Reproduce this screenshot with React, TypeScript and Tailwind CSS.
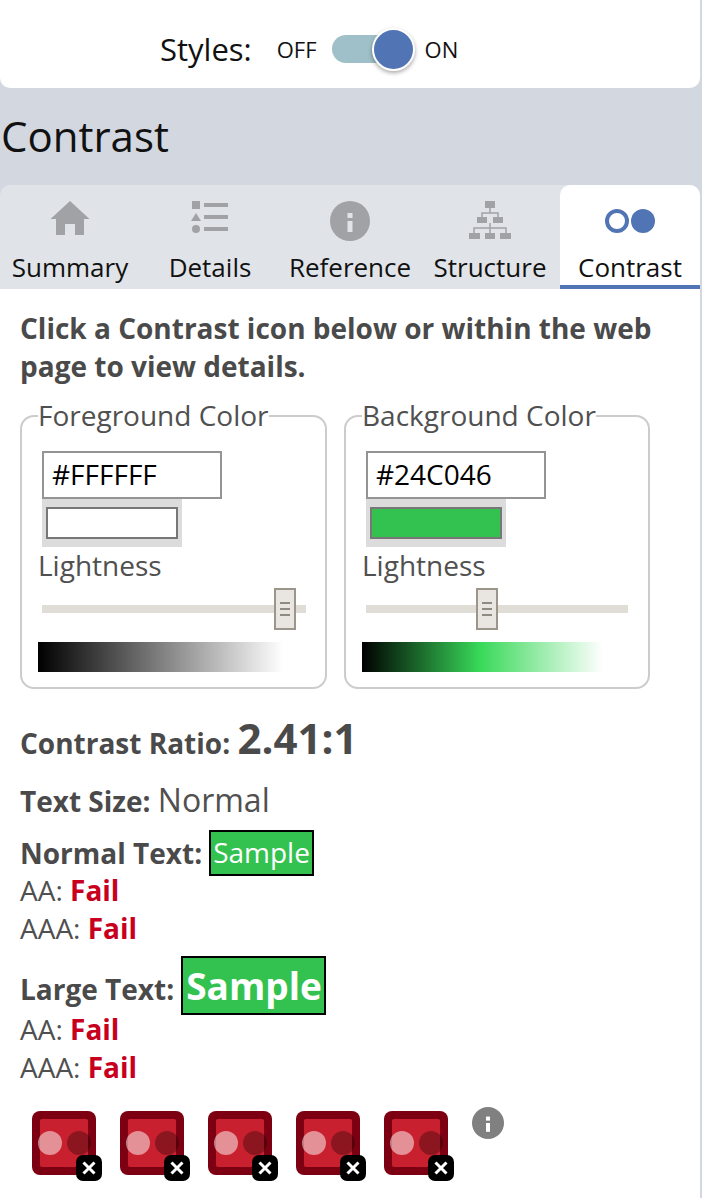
import React from "react";

const GRAY = "#a0a2a6";
const BLUE = "#5174b4";

function Tab({ label, active, icon }: { label: string; active?: boolean; icon: React.ReactNode }) {
  return (
    <div className={`w-[140px] h-[104px] flex flex-col items-center ${active ? "bg-white rounded-t-[10px] border-b-[4px] border-[#5174b4]" : ""}`}>
      <div className="h-[65px] w-full flex items-start justify-center">{icon}</div>
      <div className="text-[26px] leading-[34px] text-[#111] whitespace-nowrap">{label}</div>
    </div>
  );
}

function Home() {
  return (
    <svg width="40" height="34" viewBox="0 0 40 34" className="mt-[16px]">
      <path fill={GRAY} d="M20 0 L39.500 18 L34 18 L34 34 L25 34 L25 23 L15 23 L15 34 L6 34 L6 18 L0.500 18 Z" />
    </svg>
  );
}

function DetailsIcon() {
  return (
    <svg width="38" height="33" viewBox="0 0 38 33" className="mt-[16px]">
      <rect x="1" y="0" width="8" height="8" fill={GRAY} />
      <path d="M5 12 L10 20 L0 20 Z" fill={GRAY} />
      <circle cx="5" cy="28" r="4" fill={GRAY} />
      <rect x="13" y="2" width="24" height="4" fill={GRAY} />
      <rect x="13" y="14" width="24" height="4" fill={GRAY} />
      <rect x="13" y="26" width="24" height="4" fill={GRAY} />
    </svg>
  );
}

function InfoIcon({ size, color, inner, top }: { size: number; color: string; inner: string; top: number }) {
  return (
    <svg width={size} height={size} viewBox="0 0 40 40" style={{ marginTop: top }}>
      <circle cx="20" cy="20" r="20" fill={color} />
      <rect x="17.500" y="12" width="5" height="5" fill={inner} />
      <rect x="17.500" y="20" width="5" height="11" fill={inner} />
    </svg>
  );
}

function StructureIcon() {
  return (
    <svg width="42" height="38" viewBox="0 0 42 38" className="mt-[16px]" fill={GRAY}>
      <rect x="16" y="0" width="10" height="7" />
      <rect x="8" y="16" width="10" height="6" />
      <rect x="24" y="16" width="10" height="6" />
      <rect x="0" y="32" width="11" height="6" />
      <rect x="16" y="32" width="10" height="6" />
      <rect x="31" y="32" width="11" height="6" />
      <path fill="none" stroke={GRAY} strokeWidth="1.500" d="M21 7V12M13 16V12H29V16M21 22V27M5 32V27H37V32M21 27V32" />
    </svg>
  );
}

function ContrastIcon() {
  return (
    <svg width="50" height="24" viewBox="0 0 50 24" className="mt-[24px]">
      <circle cx="12" cy="12" r="10" fill="none" stroke={BLUE} strokeWidth="4" />
      <circle cx="38" cy="12" r="12" fill={BLUE} />
    </svg>
  );
}

function Slider({ pos, width }: { pos: number; width: number }) {
  return (
    <div className="relative h-[42px] flex items-center" style={{ width }}>
      <div className="w-full h-[8px] bg-[#e0dcd6]" />
      <div className="absolute top-0 w-[22px] h-[42px] bg-[#e9e5e1] border-[2px] border-[#9b958c] flex flex-col items-center justify-center gap-[4px]" style={{ left: pos }}>
        <div className="w-[10px] h-[2px] bg-[#8f8a82]" />
        <div className="w-[10px] h-[2px] bg-[#8f8a82]" />
        <div className="w-[10px] h-[2px] bg-[#8f8a82]" />
      </div>
    </div>
  );
}

function ColorBox({ title, hex, swatch, sliderPos, sliderWidth, gradient, gradientWidth, width }: {
  title: string; hex: string; swatch: string; sliderPos: number; sliderWidth: number; gradient: string; gradientWidth: number; width: number;
}) {
  return (
    <fieldset className="border-[2px] border-[#cccccc] rounded-[14px] h-[290px] pl-[16px] box-border" style={{ width }}>
      <legend className="text-[28px] leading-[34px] text-[#505050] -translate-y-px">{title}</legend>
      <div className="ml-[4px] mt-[18px] w-[180px] h-[48px] border-[2px] border-[#949494] bg-white pl-[8px] text-[28px] leading-[42px] text-black">{hex}</div>
      <div className="ml-[4px] w-[140px] h-[48px] bg-[#dcdcdc] px-[4px] py-[8px]">
        <div className="w-[132px] h-[32px] border-[2px] border-[#777]" style={{ background: swatch }} />
      </div>
      <div className="text-[28px] leading-[34px] text-[#505050] mt-[1px]">Lightness</div>
      <div className="ml-[4px] mt-[6px]"><Slider pos={sliderPos} width={sliderWidth} /></div>
      <div className="h-[30px] mt-[12px]" style={{ background: gradient, width: gradientWidth }} />
    </fieldset>
  );
}

function Fail() {
  return <span className="font-bold text-[#c8001e]">Fail</span>;
}

function Badge() {
  return (
    <div className="relative w-[64px] h-[64px]">
      <div className="w-[64px] h-[64px] rounded-[8px] bg-[#7d0012] p-[8px]">
        <div className="w-full h-full bg-[#c8202e] rounded-[2px]" />
      </div>
      <div className="absolute left-[6px] top-[20px] w-[24px] h-[24px] rounded-full bg-white/50" />
      <div className="absolute left-[35px] top-[20px] w-[24px] h-[24px] rounded-full bg-black/30" />
      <div className="absolute left-[44px] top-[44px] w-[26px] h-[26px] rounded-[7px] bg-black flex items-center justify-center">
        <svg width="14" height="14" viewBox="0 0 14 14"><path d="M1.500 1.500 L12.500 12.500 M12.500 1.500 L1.500 12.500" stroke="white" strokeWidth="3" /></svg>
      </div>
    </div>
  );
}

export default function App() {
  return (
    <div className="w-[702px] h-[1198px] bg-[#d3d7df] overflow-hidden" style={{ fontFamily: '"Open Sans", sans-serif' }}>
      <div className="w-[700px]">
        <div className="h-[289px]">
          <div className="bg-white h-[88px] rounded-b-[10px] flex items-center pl-[160px] pt-[10px]">
            <span className="text-[31px] leading-[40px] text-[#111]">Styles:</span>
            <span className="text-[22px] leading-[40px] text-[#111] ml-[25px]">OFF</span>
            <div className="relative w-[83px] h-[28px] ml-[15px]">
              <div className="w-[62px] h-[28px] rounded-full bg-[#9fc0c8]" />
              <div className="absolute left-[40px] top-[-7px] w-[43px] h-[43px] rounded-full bg-[#5174b4] border-[2px] border-white shadow-[0_2px_4px_rgba(0,0,0,0.35)]" />
            </div>
            <span className="text-[22px] leading-[40px] text-[#111] ml-[10px]">ON</span>
          </div>
          <h1 className="text-[42px] leading-[54px] text-[#111] pl-[1px] mt-[21px] h-[76px]">Contrast</h1>
          <div className="h-[104px] bg-[#e0e3e8] rounded-t-[10px] flex">
            <Tab label="Summary" icon={<Home />} />
            <Tab label="Details" icon={<DetailsIcon />} />
            <Tab label="Reference" icon={<InfoIcon size={40} color={GRAY} inner="#e0e3e8" top={16} />} />
            <Tab label="Structure" icon={<StructureIcon />} />
            <Tab label="Contrast" active icon={<ContrastIcon />} />
          </div>
        </div>

        <div className="bg-white h-[909px] pl-[20px] pr-[20px] text-[#505050] overflow-hidden">
          <p className="font-bold text-[28px] leading-[38px] mt-[20px] text-[#4a4a4a]">Click a Contrast icon below or within the web page to view details.</p>
          <div className="flex gap-[17px] mt-[14px]">
            <ColorBox title="Foreground Color" hex="#FFFFFF" swatch="#fff" sliderPos={232} sliderWidth={264} gradient="linear-gradient(to right,#000,#fff)" gradientWidth={245} width={307} />
            <ColorBox title="Background Color" hex="#24C046" swatch="#33c24f" sliderPos={110} sliderWidth={262} gradient="linear-gradient(to right,#000,#38d959 49%,#fff)" gradientWidth={241} width={306} />
          </div>

          <div className="mt-[29px] text-[28px] leading-[40px] font-bold text-[#4a4a4a]">Contrast Ratio: <span className="text-[42px]">2.41:1</span></div>
          <div className="mt-[19px] text-[28px] leading-[36px]"><b className="text-[#4a4a4a]">Text Size:</b> <span className="text-[32px]">Normal</span></div>

          <div className="mt-[11px] text-[28px] flex items-center h-[46px]"><b className="text-[#4a4a4a]">Normal Text:</b><span className="ml-[7px] bg-[#33c24f] border-[2px] border-black text-white h-[46px] leading-[40px] px-[2px]">Sample</span></div>
          <div className="text-[28px] leading-[38px] mt-[-5px]">AA: <Fail /></div>
          <div className="text-[28px] leading-[38px]">AAA: <Fail /></div>

          <div className="mt-[9px] text-[28px] flex items-center h-[59px]"><b className="mt-[7px] text-[#4a4a4a]">Large Text:</b><span className="ml-[7px] bg-[#33c24f] border-[2px] border-black text-white h-[59px] leading-[55px] pl-[3px] pr-[2px] text-[37px] font-bold">Sample</span></div>
          <div className="text-[28px] leading-[38px] mt-[-5px]">AA: <Fail /></div>
          <div className="text-[28px] leading-[38px]">AAA: <Fail /></div>

          <div className="flex mt-[25px] ml-[12px] gap-[24px] items-start">
            <Badge /><Badge /><Badge /><Badge /><Badge />
            <InfoIcon size={32} color="#808080" inner="#ffffff" top={-4} />
          </div>
        </div>
      </div>
    </div>
  );
}
